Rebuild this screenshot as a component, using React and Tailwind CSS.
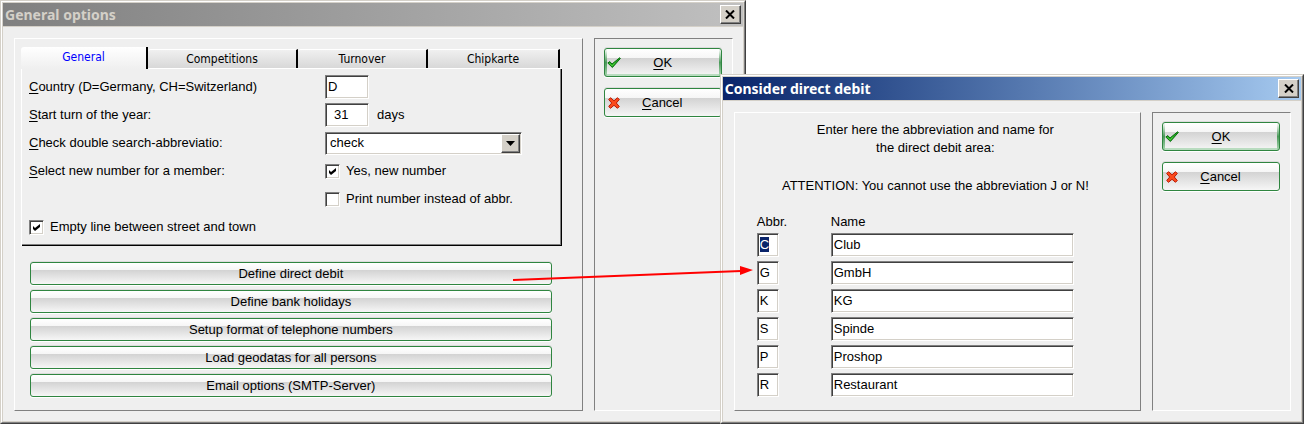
import { useState } from 'react'
import clsx from 'clsx'

const TABS = [
  { name: 'General', width: 'w-[127px]' },
  { name: 'Competitions', width: 'w-[150px]' },
  { name: 'Turnover', width: 'w-[130px]' },
  { name: 'Chipkarte', width: 'w-[132px]' },
]

const ACTIONS = [
  'Define direct debit',
  'Define bank holidays',
  'Setup format of telephone numbers',
  'Load geodatas for all persons',
  'Email options (SMTP-Server)',
]

const DEBIT_AREAS = [
  { abbr: 'C', name: 'Club' },
  { abbr: 'G', name: 'GmbH' },
  { abbr: 'K', name: 'KG' },
  { abbr: 'S', name: 'Spinde' },
  { abbr: 'P', name: 'Proshop' },
  { abbr: 'R', name: 'Restaurant' },
]

const SUNKEN = 'border border-t-[#808080] border-l-[#808080] border-b-white border-r-white shadow-[inset_1px_1px_#404040,inset_-1px_-1px_#d4d0c8] bg-white'
const BUTTON = 'rounded-[3px] border border-[#2f8540] shadow-[0_-1px_#dcdcdc,0_1px_#fff]'
const GLOSSY = 'bg-[linear-gradient(to_bottom,#ffffff_0%,#f6f6f6_33%,#d3d3d3_34%,#f6f6f6_100%)]'
// default button: green glow on both sides and along the bottom
const GLOSSY_DEFAULT = '[background:linear-gradient(to_bottom,#ffffff,#4b9a5a_50%,#a9d6b1)_left/2px_100%_no-repeat,linear-gradient(to_bottom,#ffffff,#4b9a5a_50%,#a9d6b1)_right/2px_100%_no-repeat,linear-gradient(#b9dcc0,#b9dcc0)_bottom/100%_2px_no-repeat,linear-gradient(to_bottom,#ffffff_0%,#f6f6f6_33%,#d3d3d3_34%,#f6f6f6_100%)]'
const FIELD = 'h-6 pl-[2px] pb-[2px] outline-none selection:bg-[#0a246a] selection:text-white'

function Window({ title, active, className, children }) {
  return (
    <section className={clsx('border border-t-[#d4d0c8] border-l-[#d4d0c8] border-b-[#404040] border-r-[#404040]', className)}>
      <div className="border border-t-white border-l-white border-b-[#808080] border-r-[#808080] bg-[#d4d0c8] p-px">
        <header
          className={clsx(
            'flex h-[23px] items-center justify-between pl-[2px] pr-[2px]',
            active
              ? 'bg-linear-to-r from-[#0a246a] to-[#a6caf0] text-white'
              : 'bg-linear-to-r from-[#808080] to-[#c0c0c0] text-[#d4d0c8]'
          )}
        >
          <h2 className="font-['Noto_Sans',sans-serif] text-[14px] font-bold">{title}</h2>
          <button
            aria-label="Close"
            className="flex h-[19px] w-[21px] items-center justify-center border border-t-white border-l-white border-b-[#404040] border-r-[#404040] bg-[#d4d0c8] shadow-[inset_-1px_-1px_#808080]"
          >
            <svg width="10" height="9" viewBox="0 0 10 9" stroke="#000" strokeWidth="2" fill="none">
              <path d="M1 .5 9 8.5M9 .5 1 8.5" />
            </svg>
          </button>
        </header>
        <div className="mt-px flex gap-[11px] bg-[#efefef] pt-[11px] pr-[10px] pb-[10px] pl-[11px]">{children}</div>
      </div>
    </section>
  )
}

function Raised({ className, children }) {
  return (
    <div className={clsx('min-w-0 flex-1 border border-t-white border-l-white border-b-[#808080] border-r-[#808080]', className)}>
      {children}
    </div>
  )
}

function CheckMark() {
  return (
    <svg width="14" height="12" viewBox="0 0 14 12">
      <path d="M.8 6 2.8 4.6 5 7 12.6.8 13.4 1.4 5.4 10.5Z" fill="#1fa81f" stroke="#0b6b12" />
      <path d="M2.5 6.2 5.2 9 8 5.6" stroke="#4fd03c" fill="none" />
    </svg>
  )
}

function CrossMark() {
  return (
    <svg width="12" height="12" viewBox="0 0 12 12">
      <path d="M.7 2.5 2.5.7 6 3.8 9.5.7 11.3 2.5 8.3 6 11.3 9.5 9.5 11.3 6 8.3 2.5 11.3.7 9.5 3.7 6Z" fill="#fb4a1c" stroke="#b81804" />
    </svg>
  )
}

// OK / Cancel column on the right side of every dialog
function DialogButtons() {
  return (
    <div className="flex w-[139px] shrink-0 flex-col gap-[11px] border border-t-[#808080] border-l-[#808080] border-b-white border-r-white py-[9px] pr-[10px] pl-[9px]">
      <button className={clsx(BUTTON, GLOSSY_DEFAULT, 'flex h-[29px] items-center pl-[2px]')}>
        <CheckMark />
        <span className="flex-1 pr-[16px]"><u className="underline-offset-2">O</u>K</span>
      </button>
      <button className={clsx(BUTTON, GLOSSY, 'flex h-[29px] items-center pl-[3px]')}>
        <CrossMark />
        <span className="flex-1 pr-[16px]"><u className="underline-offset-2">C</u>ancel</span>
      </button>
    </div>
  )
}

function CheckBox({ label, defaultChecked }) {
  return (
    <label className="flex items-center gap-[6px]">
      <span className="relative flex">
        <input type="checkbox" defaultChecked={defaultChecked} className={clsx(SUNKEN, 'peer size-[15px] appearance-none')} />
        <svg width="7" height="7" viewBox="0 0 7 7" className="pointer-events-none absolute top-1 left-1 hidden peer-checked:block">
          <path d="M0 2v3l2 2 5-4V0L2 4Z" fill="#000" />
        </svg>
      </span>
      {label}
    </label>
  )
}

function RowLabel({ htmlFor, text }) {
  return (
    <label htmlFor={htmlFor}>
      <u className="underline-offset-2">{text[0]}</u>{text.slice(1)}
    </label>
  )
}

function GeneralOptions() {
  const [tab, setTab] = useState('General')

  return (
    <Window title="General options" className="min-w-0 flex-[746]">
      <Raised className="pt-2 pb-[13px]">
        <div className="mr-[20px] ml-[6px]">
          {/* Tabs */}
          <div role="tablist" className="flex h-[21px] items-end font-['DejaVu_Sans_Condensed','DejaVu_Sans',sans-serif] text-[12px]">
            {TABS.map((t) => (
              <button
                key={t.name}
                role="tab"
                aria-selected={tab === t.name}
                onClick={() => setTab(t.name)}
                className={clsx(
                  'rounded-tl-[3px] border-r-2 border-r-black',
                  t.width,
                  tab === t.name
                    ? 'h-[22px] -mb-px bg-linear-to-b from-white to-[#efefef] pb-[2px] text-[#0000ff]'
                    : 'h-[19px] border-t border-t-white bg-linear-to-b from-[#f0f0f0] to-[#d8d8d8]'
                )}
              >
                {t.name}
              </button>
            ))}
          </div>
          <div className="border-t border-l border-white">
            <div className="grid auto-rows-[28px] grid-cols-[296px_1fr] items-center border-r border-b border-black py-1 pl-[7px] shadow-[inset_-1px_-1px_#808080]">
              <RowLabel htmlFor="country" text="Country (D=Germany, CH=Switzerland)" />
              <input id="country" defaultValue="D" className={clsx(SUNKEN, FIELD, 'w-[44px]')} />

              <RowLabel htmlFor="turn" text="Start turn of the year:" />
              <div className="flex items-center gap-[8px]">
                <input id="turn" defaultValue="31" className={clsx(SUNKEN, 'h-6 w-[44px] pb-[2px] pl-2 outline-none')} />
                days
              </div>

              <RowLabel htmlFor="double" text="Check double search-abbreviatio:" />
              <div className="relative w-[197px]">
                <select id="double" className={clsx(SUNKEN, 'block h-[23px] w-full appearance-none pl-1 outline-none')}>
                  <option>check</option>
                </select>
                <span className="pointer-events-none absolute top-[2px] right-[2px] flex h-[19px] w-[19px] items-center justify-center border border-t-white border-l-white border-b-[#404040] border-r-[#404040] bg-[#d4d0c8] shadow-[inset_-1px_-1px_#808080]">
                  <svg width="9" height="5" viewBox="0 0 9 5"><path d="M0 0h9L4.500 5Z" /></svg>
                </span>
              </div>

              <span><u className="underline-offset-2">S</u>elect new number for a member:</span>
              <CheckBox label="Yes, new number" defaultChecked />
              <span />
              <CheckBox label="Print number instead of abbr." />
              <CheckBox label="Empty line between street and town" defaultChecked />
            </div>
          </div>
        </div>

        {/* Actions */}
        <div className="mt-[16px] mr-[30px] ml-[15px] flex flex-col gap-[5px]">
          {ACTIONS.map((a) => (
            <button key={a} className={clsx(BUTTON, GLOSSY, 'h-[23px]')}>{a}</button>
          ))}
        </div>
      </Raised>
      <DialogButtons />
    </Window>
  )
}

function DirectDebit() {
  return (
    <Window title="Consider direct debit" active className="relative mt-[74px] -ml-[26px] min-w-0 flex-[584]">
      <Raised className="pt-2 pb-[13px]">
        <p className="pr-1 text-center leading-[18px]">
          Enter here the abbreviation and name for<br />the direct debit area:
        </p>
        <p className="mt-[20px] pr-1 text-center leading-[18px]">ATTENTION: You cannot use the abbreviation J or N!</p>
        <div className="mt-[20px] mr-[66px] ml-[22px] grid grid-cols-[74px_1fr] gap-y-1">
          <span id="abbr" className="leading-[14px]">Abbr.</span>
          <span id="name" className="leading-[14px]">Name</span>
          {DEBIT_AREAS.map((d, i) => (
            <div key={d.abbr} className="col-span-2 grid grid-cols-subgrid">
              <input
                aria-labelledby="abbr"
                defaultValue={d.abbr}
                autoFocus={i === 0}
                onFocus={(e) => e.target.select()}
                className={clsx(SUNKEN, FIELD, 'w-[22px]')}
              />
              <input aria-labelledby="name" defaultValue={d.name} className={clsx(SUNKEN, FIELD, 'w-full')} />
            </div>
          ))}
        </div>
      </Raised>
      <DialogButtons />
    </Window>
  )
}

export default function App() {
  return (
    <main className="relative flex items-start bg-white pr-px font-['Liberation_Sans',Arial,sans-serif] text-[13px] leading-[16px] text-black">
      <GeneralOptions />
      <DirectDebit />
      {/* Arrow from the button to the dialog it opens */}
      <svg width="240" height="18" viewBox="0 0 240 18" className="pointer-events-none absolute top-[264px] left-[513px]">
        <path d="M0 16 228 7" stroke="#f00" strokeWidth="2" />
        <path d="M227 2 240 6 227 11Z" fill="#f00" />
      </svg>
    </main>
  )
}
